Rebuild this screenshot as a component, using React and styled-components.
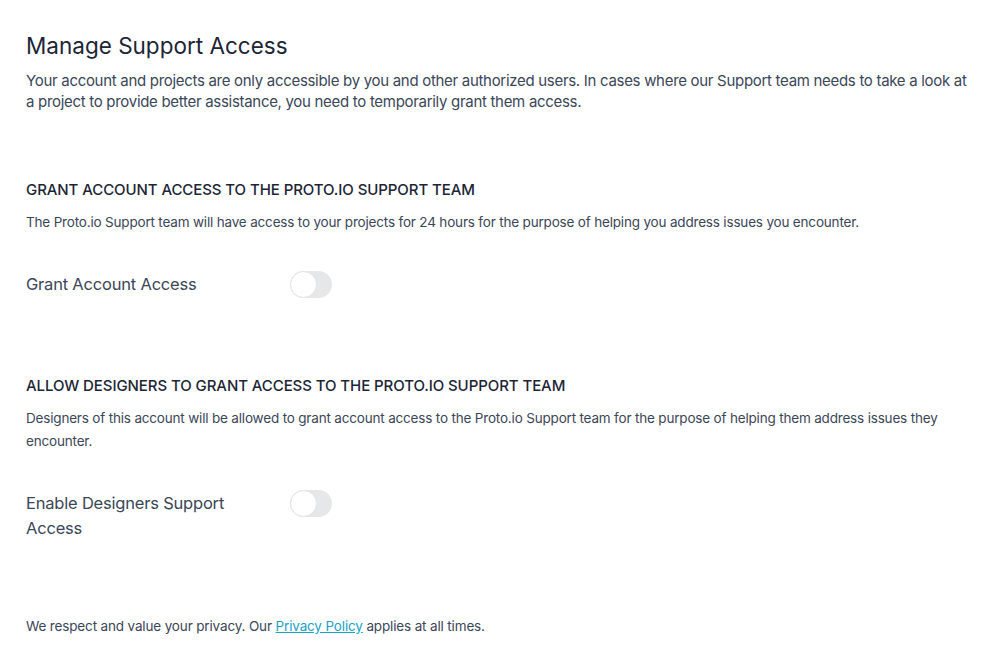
import React, { useState } from 'react';
import styled, { createGlobalStyle } from 'styled-components';

const GlobalStyle = createGlobalStyle`
    body {
        margin: 0;
        background: #ffffff;
        font-family: Inter, "Noto Sans", sans-serif;
        -webkit-font-smoothing: antialiased;
    }
`;

const Page = styled.div`
    padding: 32px 14px 24px 26px;
    color: #3b4658;
`;

const Title = styled.h1`
    margin: 0;
    font-size: 22.5px;
    font-weight: 400;
    line-height: 28px;
    color: #1c2536;
`;

const Intro = styled.p`
    margin: 10px 0 0 0;
    font-size: 15px;
    letter-spacing: -0.3px;
    line-height: 21px;
    color: #3b4658;
`;

const Section = styled.section`
    margin-top: ${props => props.top}px;
`;

const Heading = styled.h2`
    margin: 0;
    font-size: 15px;
    font-weight: 500;
    letter-spacing: -0.08px;
    line-height: 20px;
    text-transform: uppercase;
    color: #1c2536;
`;

const Description = styled.p`
    margin: 11px 0 0 0;
    font-size: 13.5px;
    letter-spacing: -0.18px;
    line-height: 23px;
    color: #3b4658;
`;

const Row = styled.div`
    display: grid;
    grid-template-columns: 264px auto;
    align-items: start;
    margin-top: ${props => props.top}px;
`;

const Label = styled.div`
    font-size: 16.5px;
    letter-spacing: -0.2px;
    line-height: 25px;
    color: #3b4658;
    width: 220px;
`;

const Track = styled.button`
    position: relative;
    width: 42px;
    height: 27px;
    padding: 0;
    border: 0;
    border-radius: 14px;
    background: ${props => (props.on ? '#17a2c5' : '#e6e7e9')};
    cursor: pointer;
    margin-top: -1px;
`;

const Knob = styled.span`
    position: absolute;
    top: 0;
    left: ${props => (props.on ? '15px' : '0')};
    width: 27px;
    height: 27px;
    box-sizing: border-box;
    border-radius: 50%;
    background: #ffffff;
    border: 1px solid #e3e4e6;
    transition: left 0.15s;
`;

const Footer = styled.p`
    margin: 75px 0 0 0;
    font-size: 13.5px;
    letter-spacing: -0.15px;
    line-height: 20px;
    color: #3b4658;
`;

const Link = styled.a`
    color: #1aa3c6;
    text-decoration: underline;
`;

const Toggle = ({ on, onClick }) => (
    <Track on={on ? 1 : 0} onClick={onClick}>
        <Knob on={on ? 1 : 0} />
    </Track>
);

const App = () => {
    const [grant, setGrant] = useState(false);
    const [designers, setDesigners] = useState(false);

    return (
        <>
            <GlobalStyle />
            <Page>
                <Title>Manage Support Access</Title>
                <Intro>
                    Your account and projects are only accessible by you and other authorized users. In cases where our Support team needs to take a look at a project to provide better assistance, you need to temporarily grant them access.
                </Intro>

                <Section top={68}>
                    <Heading>Grant account access to the Proto.io Support team</Heading>
                    <Description>
                        The Proto.io Support team will have access to your projects for 24 hours for the purpose of helping you address issues you encounter.
                    </Description>
                    <Row top={38}>
                        <Label>Grant Account Access</Label>
                        <Toggle on={grant} onClick={() => setGrant(!grant)} />
                    </Row>
                </Section>

                <Section top={78}>
                    <Heading>Allow designers to grant access to the Proto.io Support team</Heading>
                    <Description>
                        Designers of this account will be allowed to grant account access to the Proto.io Support team for the purpose of helping them address issues they encounter.
                    </Description>
                    <Row top={38}>
                        <Label>Enable Designers Support Access</Label>
                        <Toggle on={designers} onClick={() => setDesigners(!designers)} />
                    </Row>
                </Section>

                <Footer>
                    We respect and value your privacy. Our <Link href="#">Privacy Policy</Link> applies at all times.
                </Footer>
            </Page>
        </>
    );
};

export default App;
